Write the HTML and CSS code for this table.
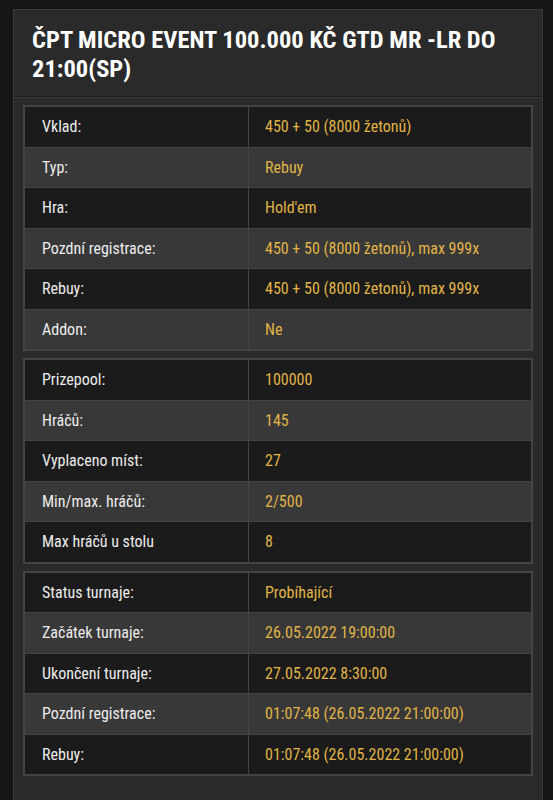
FILE: index.html
```html
<!DOCTYPE html>
<html lang="cs">
<head>
<meta charset="utf-8">
<link rel="stylesheet" href="styles.css">
</head>
<body>
<div class="panel">
  <div class="panel-head">
    <h1 class="title">ČPT MICRO EVENT 100.000 KČ GTD MR -LR DO 21:00(SP)</h1>
  </div>
  <div class="panel-body">
    <table class="info">
      <tr><td class="lbl">Vklad:</td><td class="val">450 + 50 (8000 žetonů)</td></tr>
      <tr><td class="lbl">Typ:</td><td class="val">Rebuy</td></tr>
      <tr><td class="lbl">Hra:</td><td class="val">Hold'em</td></tr>
      <tr><td class="lbl">Pozdní registrace:</td><td class="val">450 + 50 (8000 žetonů), max 999x</td></tr>
      <tr><td class="lbl">Rebuy:</td><td class="val">450 + 50 (8000 žetonů), max 999x</td></tr>
      <tr><td class="lbl">Addon:</td><td class="val">Ne</td></tr>
    </table>
    <table class="info">
      <tr><td class="lbl">Prizepool:</td><td class="val">100000</td></tr>
      <tr><td class="lbl">Hráčů:</td><td class="val">145</td></tr>
      <tr><td class="lbl">Vyplaceno míst:</td><td class="val">27</td></tr>
      <tr><td class="lbl">Min/max. hráčů:</td><td class="val">2/500</td></tr>
      <tr><td class="lbl">Max hráčů u stolu</td><td class="val">8</td></tr>
    </table>
    <table class="info">
      <tr><td class="lbl">Status turnaje:</td><td class="val">Probíhající</td></tr>
      <tr><td class="lbl">Začátek turnaje:</td><td class="val">26.05.2022 19:00:00</td></tr>
      <tr><td class="lbl">Ukončení turnaje:</td><td class="val">27.05.2022 8:30:00</td></tr>
      <tr><td class="lbl">Pozdní registrace:</td><td class="val">01:07:48 (26.05.2022 21:00:00)</td></tr>
      <tr><td class="lbl">Rebuy:</td><td class="val">01:07:48 (26.05.2022 21:00:00)</td></tr>
    </table>
  </div>
</div>
</body>
</html>
```
FILE: styles.css
```css
html, body {
  margin: 0;
  padding: 0;
}
body {
  background: #161616;
  font-family: "Roboto Condensed", Roboto, "Liberation Sans", sans-serif;
  font-stretch: condensed;
  padding: 9px 10px 0 13px;
  height: 800px;
  box-sizing: border-box;
  overflow: hidden;
}
.panel {
  background: #2a2a2a;
  border: 1px solid #3b3b3b;
  border-bottom: none;
  min-height: 820px;
}
.panel-head {
  padding: 15px 18px 13px;
  border-bottom: 1px solid #1a1a1a;
  box-shadow: 0 1px 0 #3a3a3a;
}
.title {
  margin: 0;
  color: #ffffff;
  font-size: 24.5px;
  line-height: 29px;
  font-weight: 700;
}
.panel-body {
  padding: 8px 9px 0 9px;
  display: flex;
  flex-direction: column;
  gap: 7px;
}
.info {
  width: 100%;
  border-collapse: collapse;
  border: 2px solid #444;
  table-layout: fixed;
}
.info td {
  height: 39.5px;
  padding: 0 16px;
  font-size: 16px;
  border: 1px solid #444;
  vertical-align: middle;
}
.info tr:nth-child(odd) td { background: #1b1b1b; }
.info tr:nth-child(even) td { background: #383838; }
.lbl {
  width: 190px;
  color: #ececec;
  padding-left: 17px !important;
}
.val {
  color: #e0b447;
}
```
